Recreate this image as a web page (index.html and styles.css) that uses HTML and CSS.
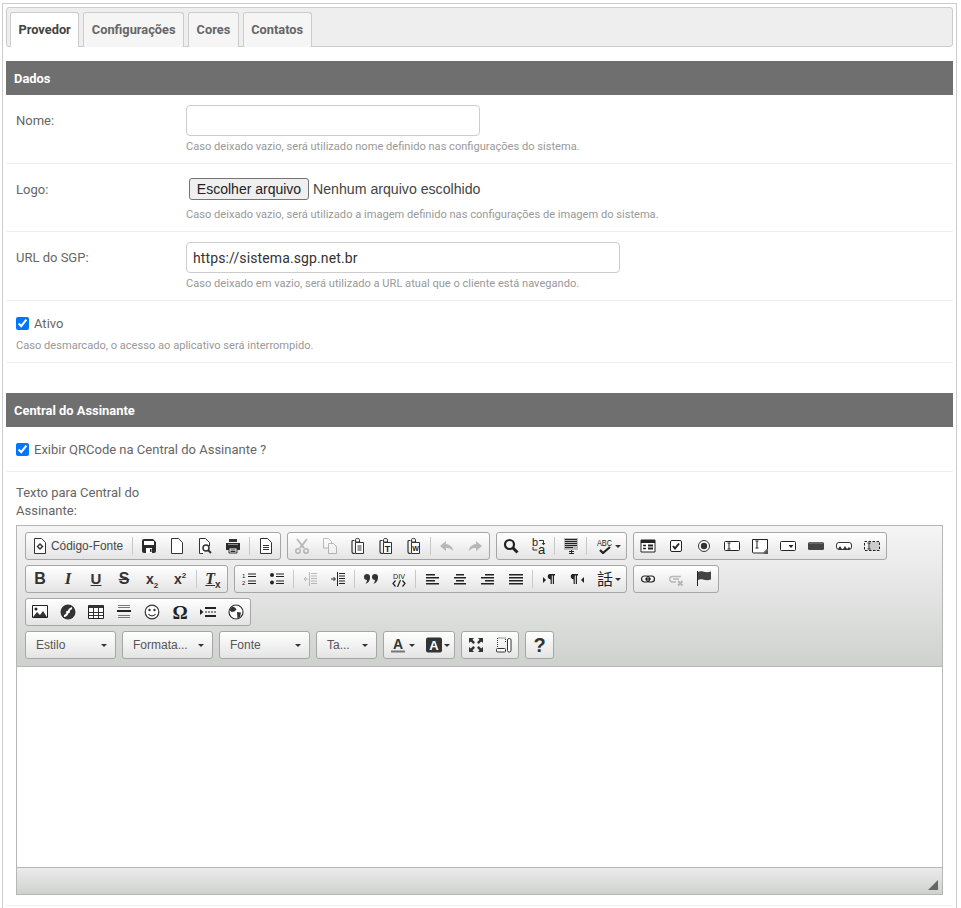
FILE: index.html
```html
<!DOCTYPE html>
<html>
    <head>
        <meta charset="UTF-8" />
        <title>Provedor</title>
        <link rel="stylesheet" href="styles.css">
    </head>
    <body>
        <svg class="sprites" xmlns="http://www.w3.org/2000/svg">
            <symbol id="i-source" viewBox="0 0 16 16"><path d="M2.500.5h7l4 4v11h-11z" fill="#fff" stroke="#333"/><path d="M8 5l3.500 3.500L8 12 4.500 8.500z" fill="#333"/><path d="M8 7l1.500 1.500L8 10 6.500 8.500z" fill="#fff"/></symbol>
            <symbol id="i-save" viewBox="0 0 16 16"><path d="M1 3a2 2 0 0 1 2-2h9l3 3v9a2 2 0 0 1-2 2H3a2 2 0 0 1-2-2z" fill="#2b2b2b"/><path d="M3 3h10v4H3z" fill="#fff"/><path d="M5 10h6v5H5z" fill="#fff"/><path d="M9 11h1.500v3H9z" fill="#2b2b2b"/></symbol>
            <symbol id="i-new" viewBox="0 0 16 16"><path d="M2.500.5h7l4 4v11h-11z" fill="#fff" stroke="#333"/></symbol>
            <symbol id="i-preview" viewBox="0 0 16 16"><path d="M6 15.500H2.500V.5h6l4 4V8" fill="#fff" stroke="#333"/><circle cx="9" cy="10" r="3" fill="#fff" stroke="#333" stroke-width="1.500"/><path d="M11 12l3 3" stroke="#333" stroke-width="2"/></symbol>
            <symbol id="i-print" viewBox="0 0 16 16"><path d="M4 1h8v3H4z" fill="#333"/><path d="M1 5h14v7h-3v-2H4v2H1z" fill="#2b2b2b"/><path d="M4 10h8v5H4z" fill="#fff" stroke="#2b2b2b"/><path d="M5.500 12h5M5.500 13.500h5" stroke="#2b2b2b"/><path d="M3 6.500h10" stroke="#888"/></symbol>
            <symbol id="i-templates" viewBox="0 0 16 16"><path d="M2.500.5h7l4 4v11h-11z" fill="#fff" stroke="#333"/><path d="M5 7.500h6M5 9.500h6M5 11.500h6" stroke="#333"/></symbol>
            <symbol id="i-cut" viewBox="0 0 16 16"><path d="M3 1l7 9M13 1L6 10" stroke="#333" stroke-width="2" fill="none"/><circle cx="4" cy="13" r="2.200" fill="none" stroke="#333" stroke-width="1.500"/><circle cx="12" cy="13" r="2.200" fill="none" stroke="#333" stroke-width="1.500"/></symbol>
            <symbol id="i-copy" viewBox="0 0 16 16"><path d="M1.500.5h5l3 3V10h-8z" fill="#fff" stroke="#333"/><path d="M6.500 5.500h5l3 3v7h-8z" fill="#fff" stroke="#333"/></symbol>
            <symbol id="i-paste" viewBox="0 0 16 16"><path d="M4.500 2.500H3a1 1 0 0 0-1 1v10a2 2 0 0 0 2 2h1" fill="none" stroke="#333" stroke-width="1.200"/><path d="M5.500 1.500a2 1 0 0 1 4 0V4h-4z" fill="none" stroke="#333"/><path d="M5.500 4.500h8v11h-8z" fill="#fff" stroke="#333"/><path d="M7.500 8h4M7.500 10h4M7.500 12h4" stroke="#333"/></symbol>
            <symbol id="i-pastetext" viewBox="0 0 16 16"><path d="M4.500 2.500H3a1 1 0 0 0-1 1v10a2 2 0 0 0 2 2h1" fill="none" stroke="#333" stroke-width="1.200"/><path d="M5.500 1.500a2 1 0 0 1 4 0V4h-4z" fill="none" stroke="#333"/><path d="M5.500 4.500h8v11h-8z" fill="#fff" stroke="#333"/><text x="9.500" y="13.500" class="g g-t">T</text></symbol>
            <symbol id="i-pasteword" viewBox="0 0 16 16"><path d="M4.500 2.500H3a1 1 0 0 0-1 1v10a2 2 0 0 0 2 2h1" fill="none" stroke="#333" stroke-width="1.200"/><path d="M5.500 1.500a2 1 0 0 1 4 0V4h-4z" fill="none" stroke="#333"/><path d="M5.500 4.500h8v11h-8z" fill="#fff" stroke="#333"/><text x="9.500" y="13" class="g g-w">W</text></symbol>
            <symbol id="i-undo" viewBox="0 0 16 16"><path d="M7 3L1 8l6 5v-3c3 0 5 .5 7 3 0-4-3-6.500-7-7z" fill="#333"/></symbol>
            <symbol id="i-redo" viewBox="0 0 16 16"><path d="M9 3l6 5-6 5v-3c-3 0-5 .5-7 3 0-4 3-6.500 7-7z" fill="#333"/></symbol>
            <symbol id="i-find" viewBox="0 0 16 16"><circle cx="6.500" cy="6.500" r="4.500" fill="none" stroke="#222" stroke-width="2.200"/><path d="M10 10l4.500 4.500" stroke="#222" stroke-width="3"/></symbol>
            <symbol id="i-replace" viewBox="0 0 16 16"><text x="1" y="8" class="g g-r">b</text><text x="7" y="16" class="g g-r2">a</text><path d="M8 2.500h4.500v4M11 5l1.500 1.800L14 5M6.500 12H2V9" fill="none" stroke="#333"/></symbol>
            <symbol id="i-selectall" viewBox="0 0 16 16"><path d="M1 0h14v12H1z" fill="#bbb"/><path d="M2 1.500h12M2 3.500h12M2 5.500h12M2 7.500h12M2 9.500h8" stroke="#222"/><path d="M6 13.500h5M8.500 12v4M6 15.500h5" stroke="#222"/></symbol>
            <symbol id="i-spell" viewBox="0 0 16 16"><text x="0" y="8" class="g g-abc" textLength="15" lengthAdjust="spacingAndGlyphs">ABC</text><path d="M3 12l3 3L13 9" fill="none" stroke="#222" stroke-width="2.200"/></symbol>
            <symbol id="i-form" viewBox="0 0 16 16"><path d="M1 2h14v12H1z" fill="#fff" stroke="#222"/><path d="M1 2h14v3H1z" fill="#222"/><path d="M3 7.500h3M3 10.500h3" stroke="#222" stroke-width="1.500"/><path d="M8 6.500h5v2H8zM8 9.500h5v2H8z" fill="#222"/></symbol>
            <symbol id="i-checkbox" viewBox="0 0 16 16"><rect x="2.500" y="2.500" width="11" height="11" rx="1.500" fill="#fff" stroke="#222"/><path d="M5 8l2 2.500L11 5.500" fill="none" stroke="#222" stroke-width="2"/></symbol>
            <symbol id="i-radio" viewBox="0 0 16 16"><circle cx="8" cy="8" r="5.500" fill="#fff" stroke="#333"/><circle cx="8" cy="8" r="3.200" fill="#333"/></symbol>
            <symbol id="i-text" viewBox="0 0 16 16"><rect x=".5" y="3.500" width="15" height="9" rx="1" fill="#fff" stroke="#222"/><path d="M3.500 5h3M3.500 11h3M5 5v6" stroke="#222"/></symbol>
            <symbol id="i-textarea" viewBox="0 0 16 16"><path d="M.5 1.500h15V11l-4 4H1.500a1 1 0 0 1-1-1z" fill="#fff" stroke="#222"/><path d="M3.500 3h3M3.500 10h3M5 3v7" stroke="#222"/><path d="M16 11v5h-5z" fill="#555"/></symbol>
            <symbol id="i-select" viewBox="0 0 16 16"><rect x=".5" y="3.500" width="15" height="9" rx="1" fill="#fff" stroke="#222"/><path d="M8.500 7h5l-2.500 3z" fill="#222"/></symbol>
            <symbol id="i-button" viewBox="0 0 16 16"><rect y="4" width="16" height="8" rx="1.500" fill="#444"/><path d="M1 5h14" stroke="#888"/></symbol>
            <symbol id="i-imgbutton" viewBox="0 0 16 16"><rect x=".5" y="4.500" width="15" height="7" rx="2.500" fill="#fff" stroke="#333"/><path d="M2 11l2-3 2 3zM7 11l2-3 2 3zM11 11l2-2 1.500 2z" fill="#333"/></symbol>
            <symbol id="i-hidden" viewBox="0 0 16 16"><path d="M6 4h9v9H6z" fill="#ccc"/><rect x=".5" y="3.500" width="15" height="9" fill="none" stroke="#222" stroke-dasharray="2.500 1.500"/><path d="M3.500 5h3M3.500 11h3M5 5v6" stroke="#222"/></symbol>
            <symbol id="i-ol" viewBox="0 0 16 16"><text x="1" y="7" class="g g-n">1</text><text x="1" y="14" class="g g-n">2</text><path d="M7 3h8M7 5.500h8M7 10h8M7 12.500h8" stroke="#222"/></symbol>
            <symbol id="i-ul" viewBox="0 0 16 16"><circle cx="3" cy="4" r="2" fill="#222"/><circle cx="3" cy="11.500" r="2" fill="#222"/><path d="M7 3h8M7 5.500h8M7 10h8M7 12.500h8" stroke="#222"/></symbol>
            <symbol id="i-outdent" viewBox="0 0 16 16"><path d="M7.500 1v14" stroke="#333"/><path d="M9 2.500h6M9 5h6M9 7.500h6M9 10h6M9 12.500h6" stroke="#333"/><path d="M6 8H2M4 6L2 8l2 2" fill="none" stroke="#333"/></symbol>
            <symbol id="i-indent" viewBox="0 0 16 16"><path d="M7.500 1v14" stroke="#222"/><path d="M9 2.500h6M9 5h6M9 7.500h6M9 10h6M9 12.500h6" stroke="#222"/><path d="M1 8h4M3.500 6L5.500 8l-2 2" fill="none" stroke="#222"/></symbol>
            <symbol id="i-quote" viewBox="0 0 16 16"><circle cx="4" cy="6" r="3" fill="#333"/><path d="M7 6c0 4-2 6-4.500 7 1.500-2 1.500-3.500 1.500-5z" fill="#333"/><circle cx="12" cy="6" r="3" fill="#333"/><path d="M15 6c0 4-2 6-4.500 7 1.500-2 1.500-3.500 1.500-5z" fill="#333"/></symbol>
            <symbol id="i-div" viewBox="0 0 16 16"><text x="2" y="8" class="g g-div" textLength="12" lengthAdjust="spacingAndGlyphs">DIV</text><path d="M4.500 9.500L2 12.500l2.500 3M11.500 9.500l2.500 3-2.500 3M9.500 9l-3 7" fill="none" stroke="#222" stroke-width="1.200"/></symbol>
            <symbol id="i-left" viewBox="0 0 16 16"><path d="M2 3h9v1.500H2zM2 6h13v1.500H2zM2 9h9v1.500H2zM2 12h13v1.500H2z" fill="#222"/></symbol>
            <symbol id="i-center" viewBox="0 0 16 16"><path d="M4 3h8v1.500H4zM2 6h12v1.500H2zM4 9h8v1.500H4zM2 12h12v1.500H2z" fill="#222"/></symbol>
            <symbol id="i-right" viewBox="0 0 16 16"><path d="M5 3h9v1.500H5zM1 6h13v1.500H1zM5 9h9v1.500H5zM1 12h13v1.500H1z" fill="#222"/></symbol>
            <symbol id="i-justify" viewBox="0 0 16 16"><path d="M1 3h14v1.500H1zM1 6h14v1.500H1zM1 9h14v1.500H1zM1 12h14v1.500H1z" fill="#222"/></symbol>
            <symbol id="i-ltr" viewBox="0 0 16 16"><path d="M2 6l3 3-3 3z" fill="#222"/><path d="M8 3h6v1.500h-1V13h-1.200V4.500h-1V13H9.600V8.500A3 3 0 0 1 8 3z" fill="#222"/></symbol>
            <symbol id="i-rtl" viewBox="0 0 16 16"><path d="M15 6l-3 3 3 3z" fill="#222"/><path d="M3 3h6v1.500H8V13H6.800V4.500h-1V13H4.600V8.500A3 3 0 0 1 3 3z" fill="#222"/></symbol>
            <symbol id="i-lang" viewBox="0 0 16 16"><text x="8" y="14" class="g g-lang">話</text></symbol>
            <symbol id="i-link" viewBox="0 0 16 16"><rect x="1.500" y="5" width="8" height="6" rx="3" fill="none" stroke="#222" stroke-width="1.200"/><rect x="6.500" y="5" width="8" height="6" rx="3" fill="none" stroke="#222" stroke-width="1.200"/><path d="M5 8h6" stroke="#222" stroke-width="1.200"/></symbol>
            <symbol id="i-unlink" viewBox="0 0 16 16"><path d="M13 5.500H4.500a2.700 2.700 0 0 0 0 5.500H8M5 8h6" fill="none" stroke="#333" stroke-width="1.300"/><path d="M10 10l4.500 4.500M14.500 10L10 14.500" stroke="#333" stroke-width="1.800"/></symbol>
            <symbol id="i-flag" viewBox="0 0 16 16"><path d="M1.500 0v15" stroke="#222"/><path d="M2 1c4-2 7 1.500 13-.5v8c-6 2-9-1.500-13 .5z" fill="#444"/></symbol>
            <symbol id="i-image" viewBox="0 0 16 16"><path d="M.5 1.500h15v12H.5z" fill="#fff" stroke="#222"/><circle cx="4" cy="5" r="1.500" fill="#222"/><path d="M1 13l4-5 3 3 3-4 4 6z" fill="#333"/></symbol>
            <symbol id="i-flash" viewBox="0 0 16 16"><circle cx="8" cy="8" r="7.500" fill="#333"/><path d="M4 12c3 0 3-2 4-4s2-3.500 4-4" fill="none" stroke="#fff" stroke-width="2"/><path d="M6 8h4" stroke="#fff" stroke-width="1.500"/></symbol>
            <symbol id="i-table" viewBox="0 0 16 16"><path d="M.5 1.500h15v13H.5z" fill="#fff" stroke="#222"/><path d="M1 1h14v3H1z" fill="#333"/><path d="M1 8.500h14M1 11.500h14M5.500 4v10M10.500 4v10" stroke="#333"/></symbol>
            <symbol id="i-hr" viewBox="0 0 16 16"><path d="M2 1.500h12M2 3.500h12M2 11.500h12M2 13.500h12" stroke="#777"/><path d="M1 6h14v2H1z" fill="#222"/></symbol>
            <symbol id="i-smiley" viewBox="0 0 16 16"><circle cx="8" cy="8" r="6.800" fill="#fff" stroke="#333" stroke-width="1.200"/><circle cx="5.500" cy="6" r="1.200" fill="#333"/><circle cx="10.500" cy="6" r="1.200" fill="#333"/><path d="M4.500 10c1.500 2.500 5.500 2.500 7 0" fill="none" stroke="#333" stroke-width="1.200"/></symbol>
            <symbol id="i-omega" viewBox="0 0 16 16"><text x="8" y="14.500" class="g g-omega">Ω</text></symbol>
            <symbol id="i-pagebreak" viewBox="0 0 16 16"><path d="M0 5l3.500 3L0 11z" fill="#222"/><path d="M5 3h11v2H5zM5 11h11v2H5z" fill="#222"/><path d="M5 8h11" stroke="#222" stroke-dasharray="2 1"/></symbol>
            <symbol id="i-iframe" viewBox="0 0 16 16"><circle cx="8" cy="8" r="7" fill="#fff" stroke="#333" stroke-width="1.200"/><path d="M4 2.500l3 1 1.500 2-2 2-3 .5-2-2zM9 8l4 .5-1 4.500-2.500 1.500z" fill="#333"/></symbol>
            <symbol id="i-fontcolor" viewBox="0 0 16 16"><text x="7" y="12" class="g g-a">A</text><path d="M0 14.500h14" stroke="#777" stroke-width="2"/></symbol>
            <symbol id="i-bgcolor" viewBox="0 0 16 16"><rect width="16" height="15" y=".5" rx="2" fill="#333"/><text x="8" y="12.500" class="g g-ab">A</text></symbol>
            <symbol id="i-maximize" viewBox="0 0 16 16"><path d="M1 1h5L4.500 2.800 7 5.300 5.300 7 2.800 4.500 1 6zM15 1v5l-1.800-1.500L10.700 7 9 5.300l2.500-2.500L10 1zM1 15v-5l1.800 1.500L5.300 9 7 10.700l-2.500 2.500L6 15zM15 15h-5l1.500-1.800L9 10.700 10.700 9l2.500 2.500L15 10z" fill="#333"/></symbol>
            <symbol id="i-blocks" viewBox="0 0 16 16"><path d="M1.500 10V1h8v5" fill="none" stroke="#333" stroke-dasharray="1 1"/><rect x=".5" y="11.500" width="9" height="3.500" rx="1" fill="#fff" stroke="#333"/><rect x="11.500" y="1.500" width="3.500" height="13.500" rx="1.500" fill="#fff" stroke="#333"/></symbol>
        </svg>

        <div class="page">
            <ul class="tabs">
                <li class="tab active">Provedor</li>
                <li class="tab">Configurações</li>
                <li class="tab">Cores</li>
                <li class="tab">Contatos</li>
            </ul>

            <h3 class="section-title first">Dados</h3>

            <div class="row">
                <label class="row-label">Nome:</label>
                <div class="row-field">
                    <input type="text" class="input input-small" value="">
                    <p class="help">Caso deixado vazio, será utilizado nome definido nas configurações do sistema.</p>
                </div>
            </div>

            <div class="row row-logo">
                <label class="row-label">Logo:</label>
                <div class="row-field">
                    <div class="file-line">
                        <button type="button" class="file-btn">Escolher arquivo</button>
                        <span class="file-name">Nenhum arquivo escolhido</span>
                    </div>
                    <p class="help help-file">Caso deixado vazio, será utilizado a imagem definido nas configurações de imagem do sistema.</p>
                </div>
            </div>

            <div class="row">
                <label class="row-label">URL do SGP:</label>
                <div class="row-field">
                    <input type="text" class="input input-large" value="https://sistema.sgp.net.br">
                    <p class="help">Caso deixado em vazio, será utilizado a URL atual que o cliente está navegando.</p>
                </div>
            </div>

            <div class="row-check row-ativo">
                <label class="check"><input type="checkbox" checked> <span class="check-text">Ativo</span></label>
                <p class="help help-check">Caso desmarcado, o acesso ao aplicativo será interrompido.</p>
            </div>

            <h3 class="section-title">Central do Assinante</h3>

            <div class="row-check row-qr">
                <label class="check"><input type="checkbox" checked> <span class="check-text">Exibir QRCode na Central do Assinante ?</span></label>
            </div>

            <div class="row-editor">
                <label class="editor-label">Texto para Central do Assinante:</label>
                <div class="editor">
                    <div class="toolbar">
                        <div class="tool-row">
                            <div class="group">
                                <a class="btn btn-source"><svg class="ic"><use href="#i-source"/></svg><span>Código-Fonte</span></a>
                                <i class="sep"></i>
                                <a class="btn"><svg class="ic"><use href="#i-save"/></svg></a>
                                <a class="btn"><svg class="ic"><use href="#i-new"/></svg></a>
                                <a class="btn"><svg class="ic"><use href="#i-preview"/></svg></a>
                                <a class="btn"><svg class="ic"><use href="#i-print"/></svg></a>
                                <i class="sep sep-wide"></i>
                                <a class="btn"><svg class="ic"><use href="#i-templates"/></svg></a>
                            </div>
                            <div class="group">
                                <a class="btn off"><svg class="ic"><use href="#i-cut"/></svg></a>
                                <a class="btn off"><svg class="ic"><use href="#i-copy"/></svg></a>
                                <a class="btn"><svg class="ic"><use href="#i-paste"/></svg></a>
                                <a class="btn"><svg class="ic"><use href="#i-pastetext"/></svg></a>
                                <a class="btn"><svg class="ic"><use href="#i-pasteword"/></svg></a>
                                <i class="sep sep-wide"></i>
                                <a class="btn off"><svg class="ic"><use href="#i-undo"/></svg></a>
                                <a class="btn off"><svg class="ic"><use href="#i-redo"/></svg></a>
                            </div>
                            <div class="group">
                                <a class="btn"><svg class="ic"><use href="#i-find"/></svg></a>
                                <a class="btn"><svg class="ic"><use href="#i-replace"/></svg></a>
                                <i class="sep"></i>
                                <a class="btn"><svg class="ic"><use href="#i-selectall"/></svg></a>
                                <i class="sep"></i>
                                <a class="btn btn-menu"><svg class="ic"><use href="#i-spell"/></svg><b class="caret"></b></a>
                            </div>
                            <div class="group">
                                <a class="btn"><svg class="ic"><use href="#i-form"/></svg></a>
                                <a class="btn"><svg class="ic"><use href="#i-checkbox"/></svg></a>
                                <a class="btn"><svg class="ic"><use href="#i-radio"/></svg></a>
                                <a class="btn"><svg class="ic"><use href="#i-text"/></svg></a>
                                <a class="btn"><svg class="ic"><use href="#i-textarea"/></svg></a>
                                <a class="btn"><svg class="ic"><use href="#i-select"/></svg></a>
                                <a class="btn"><svg class="ic"><use href="#i-button"/></svg></a>
                                <a class="btn"><svg class="ic"><use href="#i-imgbutton"/></svg></a>
                                <a class="btn"><svg class="ic"><use href="#i-hidden"/></svg></a>
                            </div>
                        </div>
                        <div class="tool-row">
                            <div class="group">
                                <a class="btn"><span class="glyph g-bold">B</span></a>
                                <a class="btn"><span class="glyph g-italic">I</span></a>
                                <a class="btn"><span class="glyph g-under">U</span></a>
                                <a class="btn"><span class="glyph g-strike">S</span></a>
                                <a class="btn"><span class="glyph g-script">x<sub>2</sub></span></a>
                                <a class="btn"><span class="glyph g-script">x<sup>2</sup></span></a>
                                <i class="sep sep-wide"></i>
                                <a class="btn"><span class="glyph g-clear">T<sub>x</sub></span></a>
                            </div>
                            <div class="group">
                                <a class="btn"><svg class="ic"><use href="#i-ol"/></svg></a>
                                <a class="btn"><svg class="ic"><use href="#i-ul"/></svg></a>
                                <i class="sep sep-wide"></i>
                                <a class="btn off"><svg class="ic"><use href="#i-outdent"/></svg></a>
                                <a class="btn"><svg class="ic"><use href="#i-indent"/></svg></a>
                                <i class="sep sep-wide"></i>
                                <a class="btn"><svg class="ic"><use href="#i-quote"/></svg></a>
                                <a class="btn"><svg class="ic"><use href="#i-div"/></svg></a>
                                <i class="sep sep-wide"></i>
                                <a class="btn"><svg class="ic"><use href="#i-left"/></svg></a>
                                <a class="btn"><svg class="ic"><use href="#i-center"/></svg></a>
                                <a class="btn"><svg class="ic"><use href="#i-right"/></svg></a>
                                <a class="btn"><svg class="ic"><use href="#i-justify"/></svg></a>
                                <i class="sep sep-wide"></i>
                                <a class="btn"><svg class="ic"><use href="#i-ltr"/></svg></a>
                                <a class="btn"><svg class="ic"><use href="#i-rtl"/></svg></a>
                                <a class="btn btn-menu btn-lang"><svg class="ic"><use href="#i-lang"/></svg><b class="caret"></b></a>
                            </div>
                            <div class="group">
                                <a class="btn"><svg class="ic"><use href="#i-link"/></svg></a>
                                <a class="btn off"><svg class="ic"><use href="#i-unlink"/></svg></a>
                                <a class="btn"><svg class="ic"><use href="#i-flag"/></svg></a>
                            </div>
                        </div>
                        <div class="tool-row">
                            <div class="group">
                                <a class="btn"><svg class="ic"><use href="#i-image"/></svg></a>
                                <a class="btn"><svg class="ic"><use href="#i-flash"/></svg></a>
                                <a class="btn"><svg class="ic"><use href="#i-table"/></svg></a>
                                <a class="btn"><svg class="ic"><use href="#i-hr"/></svg></a>
                                <a class="btn"><svg class="ic"><use href="#i-smiley"/></svg></a>
                                <a class="btn"><svg class="ic"><use href="#i-omega"/></svg></a>
                                <a class="btn"><svg class="ic"><use href="#i-pagebreak"/></svg></a>
                                <a class="btn"><svg class="ic"><use href="#i-iframe"/></svg></a>
                            </div>
                        </div>
                        <div class="tool-row">
                            <a class="combo combo-lg">Estilo<b class="caret"></b></a>
                            <a class="combo combo-lg">Formata...<b class="caret"></b></a>
                            <a class="combo combo-lg">Fonte<b class="caret"></b></a>
                            <a class="combo combo-sm">Ta...<b class="caret"></b></a>
                            <div class="group">
                                <a class="btn btn-color"><svg class="ic"><use href="#i-fontcolor"/></svg><b class="caret"></b></a>
                                <a class="btn btn-color"><svg class="ic"><use href="#i-bgcolor"/></svg><b class="caret"></b></a>
                            </div>
                            <div class="group">
                                <a class="btn"><svg class="ic"><use href="#i-maximize"/></svg></a>
                                <a class="btn"><svg class="ic"><use href="#i-blocks"/></svg></a>
                            </div>
                            <div class="group">
                                <a class="btn btn-about"><span class="glyph g-about">?</span></a>
                            </div>
                        </div>
                    </div>
                    <div class="editor-body"></div>
                    <div class="editor-bottom"><span class="resizer"></span></div>
                </div>
            </div>
        </div>
    </body>
</html>
```

FILE: styles.css
```css
* {
  margin: 0;
  padding: 0;
  box-sizing: border-box;
}

html, body {
  height: 908px;
  overflow: hidden;
  background: #fff;
  font-family: Roboto, "Liberation Sans", sans-serif;
  font-size: 13px;
  color: #555;
}

.sprites {
  display: none;
}

.page {
  margin: 3px 4px 0 2px;
  height: 920px;
  padding: 3px 3px 0 3px;
  border: 1px solid #ccc;
}

/* tabs */
.tabs {
  display: flex;
  gap: 4px;
  height: 40px;
  padding: 4px 0 0 3px;
  list-style: none;
  background: #eee;
  border: 1px solid #ccc;
  border-radius: 3px;
}

.tab {
  height: 35px;
  padding: 0 7.5px;
  line-height: 34px;
  font-weight: 700;
  font-size: 12.8px;
  color: #666;
  background: #f5f5f5;
  border: 1px solid #ccc;
  border-bottom: 0;
  border-radius: 3px 3px 0 0;
}

.tab.active {
  color: #444;
  background: #fff;
}

/* sections */
.section-title {
  height: 34px;
  margin-top: 30px;
  padding: 1px 0 0 8px;
  line-height: 34px;
  font-size: 12.9px;
  font-weight: 700;
  color: #fff;
  background: #6f6f6f;
}

.section-title.first {
  margin-top: 14px;
}

.row {
  display: grid;
  grid-template-columns: 170px 1fr;
  padding: 10px 10px 8px;
  border-bottom: 1px solid #eee;
}

.row-label {
  padding-top: 8px;
  line-height: 16px;
  color: #666;
}

.input {
  display: block;
  height: 31px;
  padding: 0 6px;
  font-family: Roboto, sans-serif;
  font-size: 14px;
  letter-spacing: .12px;
  color: #333;
  border: 1px solid #ccc;
  border-radius: 4px;
  outline: none;
}

.input-small {
  width: 294px;
}

.input-large {
  width: 434px;
}

.help {
  margin-top: 3px;
  line-height: 16px;
  font-size: 11.1px;
  color: #999;
}

.row-logo {
  padding-top: 14px;
}

.row-logo .row-label {
  padding-top: 4px;
}

.file-line {
  display: flex;
  align-items: center;
  height: 22px;
  padding-left: 3px;
  font-family: "Liberation Sans", Arial, sans-serif;
  font-size: 14.15px;
  color: #444;
}

.file-btn {
  height: 22px;
  width: 120px;
  margin-right: 4px;
  font-family: "Liberation Sans", Arial, sans-serif;
  font-size: 14px;
  color: #222;
  background: #efefef;
  border: 1px solid #767676;
  border-radius: 3px;
}

.help-file {
  margin-top: 7px;
}

.row-check {
  padding: 0 10px;
  border-bottom: 1px solid #eee;
}

.row-ativo {
  height: 62px;
  padding-top: 14px;
}

.row-qr {
  height: 45px;
  padding-top: 14px;
}

.check {
  display: flex;
  align-items: center;
  gap: 5px;
  height: 16px;
  line-height: 16px;
  color: #666;
}

.check input {
  width: 13px;
  height: 13px;
  accent-color: #0075ff;
}

.check-text {
  padding-top: 2px;
}

.help-check {
  margin-top: 7px;
}

/* editor */
.row-editor {
  padding: 12px 10px 10px;
  border-bottom: 1px solid #eee;
}

.editor-label {
  display: block;
  width: 150px;
  height: 41px;
  line-height: 18px;
  color: #666;
}

.editor {
  border: 1px solid #b6b6b6;
}

.toolbar {
  padding: 6px 8px 7px;
  border-bottom: 1px solid #b6b6b6;
  background: linear-gradient(#f5f5f5, #cfd1cf);
}

.tool-row {
  display: flex;
  gap: 6px;
  margin-bottom: 5px;
}

.tool-row:last-child {
  margin-bottom: 0;
}

.group {
  display: flex;
  align-items: center;
  height: 28px;
  border: 1px solid #a6a6a6;
  border-radius: 3px;
  background: linear-gradient(#fff, #e4e4e4);
}

.btn {
  display: flex;
  align-items: center;
  justify-content: center;
  flex: none;
  width: 28px;
  height: 26px;
  font-family: "Liberation Sans", Arial, sans-serif;
  font-size: 11.9px;
  color: #484848;
}

.btn.off .ic {
  opacity: .3;
}

.btn-source {
  width: 105px;
  gap: 3px;
  justify-content: flex-start;
  padding-left: 6px;
}

.btn-menu {
  width: 37px;
  gap: 2px;
  justify-content: flex-start;
  padding-left: 8px;
}

.btn-lang {
  width: 35px;
  padding-left: 6px;
}

.btn-color {
  width: 35px;
  gap: 2px;
  justify-content: flex-start;
  padding-left: 7px;
}

.btn-about {
  width: 27px;
}

.sep {
  display: block;
  flex: none;
  width: 4px;
  height: 18px;
  padding-left: 1px;
}

.sep::before {
  content: "";
  display: block;
  width: 1px;
  height: 18px;
  background: #c8c8c8;
}

.sep-wide {
  width: 5px;
  padding-left: 2px;
}

.ic {
  flex: none;
  width: 16px;
  height: 16px;
  overflow: visible;
}

.caret {
  flex: none;
  width: 0;
  height: 0;
  border-top: 3px solid #333;
  border-left: 3px solid transparent;
  border-right: 3px solid transparent;
}

.combo {
  display: flex;
  align-items: center;
  justify-content: space-between;
  height: 28px;
  padding: 0 8px 0 10px;
  font-family: "Liberation Sans", Arial, sans-serif;
  font-size: 12px;
  color: #555;
  border: 1px solid #a6a6a6;
  border-radius: 3px;
  background: linear-gradient(#fff, #e4e4e4);
}

.combo-lg {
  width: 91px;
}

.combo-sm {
  width: 61px;
}

.glyph {
  display: block;
  line-height: 16px;
  font-family: "Liberation Sans", Arial, sans-serif;
  color: #333;
  text-align: center;
}

.g-bold {
  font-size: 16px;
  font-weight: 700;
}

.g-italic {
  font-family: "Liberation Serif", serif;
  font-size: 17px;
  font-weight: 700;
  font-style: italic;
}

.g-under {
  font-size: 15px;
  font-weight: 700;
  text-decoration: underline;
}

.g-strike {
  font-size: 16px;
  font-weight: 700;
  text-decoration: line-through;
}

.g-script {
  font-size: 14px;
  font-weight: 700;
}

.glyph sub,
.glyph sup {
  font-size: 8px;
  line-height: 0;
}

.g-clear {
  font-family: "Liberation Serif", serif;
  font-size: 16px;
  font-weight: 700;
  font-style: italic;
  text-decoration: underline;
}

.g-clear sub {
  font-family: "Liberation Sans", sans-serif;
  font-size: 10px;
  font-style: normal;
}

.g-about {
  font-size: 20px;
  font-weight: 700;
}

.g {
  fill: #222;
  font-family: "Liberation Sans", sans-serif;
}

.g-t, .g-w, .g-a, .g-ab, .g-lang, .g-omega {
  text-anchor: middle;
}

.g-t { font-size: 9px; font-weight: 700; }
.g-w { font-size: 7px; font-weight: 700; }
.g-r { font-size: 11px; }
.g-r2 { font-size: 13px; }
.g-abc { font-size: 8.5px; }
.g-n { font-size: 6px; }
.g-div { font-size: 8px; }
.g-a { font-size: 14px; font-weight: 700; fill: #333; }
.g-ab { font-size: 13px; font-weight: 700; fill: #fff; }
.g-lang { font-family: "Noto Sans CJK TC", sans-serif; font-size: 16px; }
.g-omega { font-family: "Liberation Serif", serif; font-size: 19px; font-weight: 700; }

.editor-body {
  height: 200px;
  background: #fff;
}

.editor-bottom {
  display: flex;
  justify-content: flex-end;
  align-items: flex-end;
  height: 27px;
  padding: 0 4px 4px 0;
  border-top: 1px solid #b6b6b6;
  background: linear-gradient(#ebebeb, #cfd1cf);
}

.resizer {
  width: 0;
  height: 0;
  border-bottom: 10px solid #666;
  border-left: 10px solid transparent;
}
```
